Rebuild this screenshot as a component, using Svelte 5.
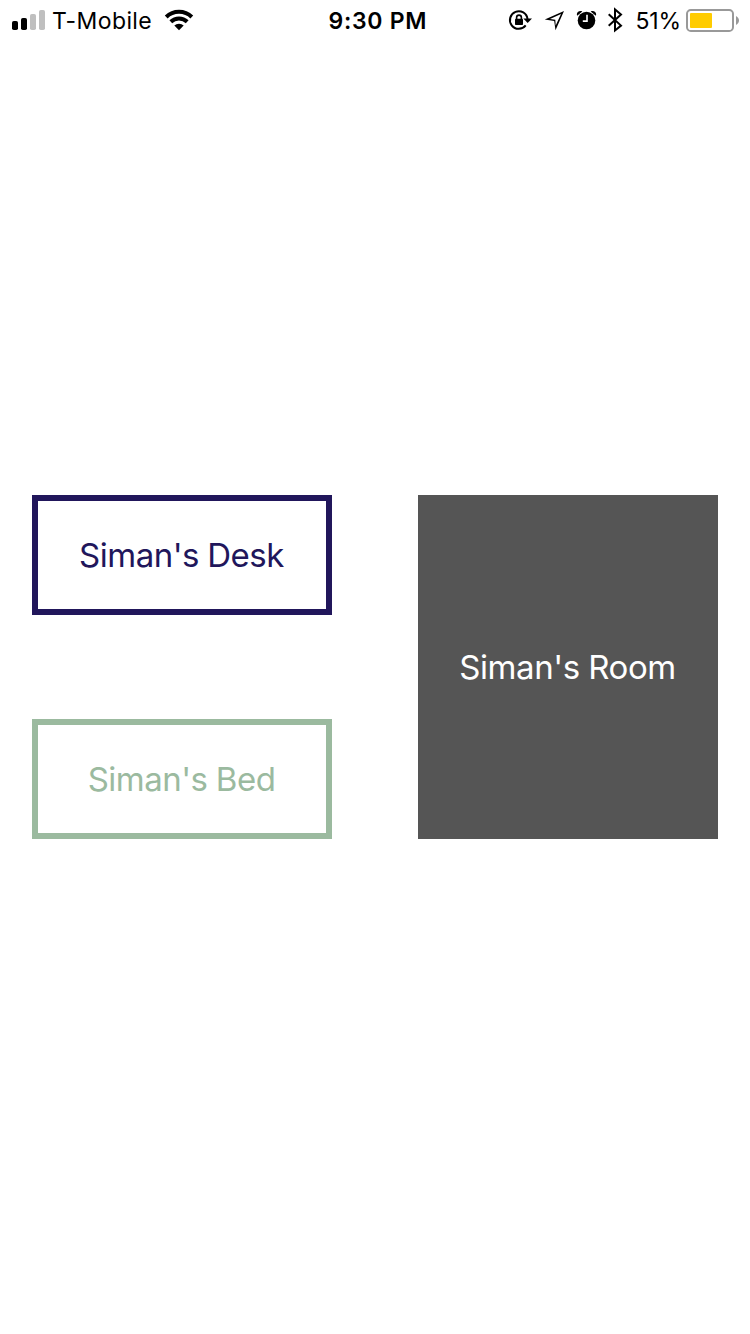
<script>
  const left = [
    { label: "Siman's Desk", kind: 'desk' },
    { label: "Siman's Bed", kind: 'bed' }
  ];
</script>

<div class="screen">
  <header class="status">
    <div class="side">
      <svg class="signal" width="34" height="40" viewBox="12 0 34 40">
        <rect x="12" y="21" width="6" height="9" rx="1.8" />
        <rect x="21" y="18" width="6" height="12" rx="1.8" />
        <rect x="30" y="14" width="6" height="16" rx="1.8" fill="#bfbfbf" />
        <rect x="39" y="10" width="6" height="20" rx="1.8" fill="#bfbfbf" />
      </svg>
      <span class="carrier">T-Mobile</span>
      <svg class="wifi" width="30" height="40" viewBox="164 0 30 40">
        <g fill="none" stroke="#000" stroke-width="4">
          <path d="M166.200 17A18.400 18.400 0 0 1 191.800 17" />
          <path d="M170.800 21.800A11.800 11.800 0 0 1 187.200 21.800" />
        </g>
        <path d="M174.300 25.600A6.700 6.700 0 0 1 183.700 25.600L179 30.200Z" />
      </svg>
    </div>
    <span class="time">9:30 PM</span>
    <div class="side right">
      <svg width="26" height="40" viewBox="507 0 26 40">
        <path d="M525.700 25.400A8.800 8.800 0 1 1 527.500 19" fill="none" stroke="#000" stroke-width="2" />
        <path d="M523.300 18.600H532L527.700 22.900Z" />
        <rect x="515" y="18.800" width="8" height="6.200" rx=".8" />
        <path d="M516.600 19V17.500A2.400 2.400 0 0 1 521.400 17.500V19" fill="none" stroke="#000" stroke-width="1.600" />
      </svg>
      <svg class="location" width="22" height="40" viewBox="544 0 22 40">
        <path fill-rule="evenodd" d="M564 11L544.800 19.500L554.200 21L555.500 30.300ZM561 14L555.700 25.500L555.300 19.800L550 19.100Z" />
      </svg>
      <svg class="alarm" width="22" height="40" viewBox="576 0 22 40">
        <circle cx="586.500" cy="20.500" r="8.800" />
        <path d="M577.200 15.800C575.800 12.500 579 10 582.300 11.400ZM595.800 15.800C597.200 12.500 594 10 590.700 11.400Z" />
        <path d="M587 14.800V21.100H582.800" fill="none" stroke="#fff" stroke-width="1.600" />
      </svg>
      <svg class="bluetooth" width="18" height="40" viewBox="606 0 18 40">
        <path d="M608.700 14.300L621 25.600L615 30.500V9.500L621 14.500L608.700 25.700" fill="none" stroke="#000" stroke-width="2" />
      </svg>
      <span class="percent">51%</span>
      <svg class="battery" width="54" height="40" viewBox="686 0 54 40">
        <rect x="687" y="10" width="46" height="21" rx="3.800" fill="#fff" stroke="#999" stroke-width="2" />
        <rect x="690" y="13" width="22" height="15" rx="1" fill="#fc0" />
        <path d="M736 16C740 18 740 23 736 25Z" fill="#999" />
      </svg>
    </div>
  </header>

  <main>
    <div class="column">
      {#each left as item}
        <button class={item.kind}><span>{item.label}</span></button>
      {/each}
    </div>
    <button class="room"><span>Siman's Room</span></button>
  </main>
</div>

<style>
  :global(body) {
    margin: 0;
    background: #fff;
  }
  .screen {
    box-sizing: border-box;
    width: 750px;
    height: 1334px;
    display: flex;
    flex-direction: column;
    font-family: Inter, "Liberation Sans", sans-serif;
    color: #000;
    background: #fff;
  }
  .status {
    height: 40px;
    flex: none;
    display: grid;
    grid-template-columns: 328px 100px 322px;
    font-size: 23px;
    line-height: 43px;
    white-space: nowrap;
  }
  .side {
    display: flex;
    padding-left: 12px;
  }
  .side.right {
    padding-left: 79px;
  }
  svg {
    flex: none;
    display: block;
  }
  .carrier {
    width: 107px;
    margin-left: 6px;
    letter-spacing: 0.4px;
  }
  .wifi {
    margin-left: 5px;
  }
  .time {
    padding-left: 0.5px;
    font-weight: 600;
    letter-spacing: 0.7px;
  }
  .location {
    margin-left: 11px;
  }
  .alarm {
    margin-left: 10px;
  }
  .bluetooth {
    margin-left: 8px;
  }
  .percent {
    width: 50.5px;
    margin-left: 11.5px;
    letter-spacing: -0.2px;
  }
  main {
    flex: none;
    display: flex;
    justify-content: space-between;
    height: 344px;
    margin-top: 455px;
    padding: 0 32px;
  }
  .column {
    display: flex;
    flex-direction: column;
    justify-content: space-between;
  }
  button {
    box-sizing: border-box;
    width: 300px;
    height: 120px;
    padding: 0 1px 0 0;
    border: 6px solid;
    border-radius: 0;
    background: #fff;
    font-family: inherit;
    font-size: 33px;
    line-height: 40px;
    letter-spacing: -0.5px;
    word-spacing: -0.5px;
    white-space: nowrap;
  }
  .desk {
    color: #21165b;
  }
  .bed {
    color: #9bba9f;
  }
  .room {
    height: 344px;
    border-color: #555;
    background: #555;
    color: #fff;
    letter-spacing: -0.4px;
  }
</style>
